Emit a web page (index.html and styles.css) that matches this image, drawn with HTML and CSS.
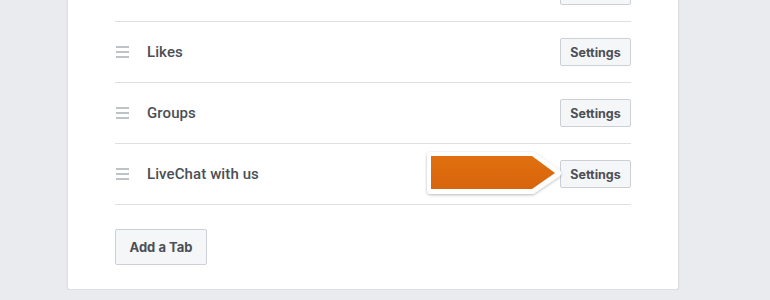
FILE: index.html
```html
<!DOCTYPE html>
<html>
<head>
<meta charset="utf-8">
<link rel="stylesheet" href="styles.css">
</head>
<body>
<div class="card">
  <ul class="tabs">
    <li class="tab">
      <span class="handle"><i></i><i></i><i></i></span>
      <span class="label"></span>
      <button class="btn" aria-label="Settings"></button>
    </li>
    <li class="tab">
      <span class="handle"><i></i><i></i><i></i></span>
      <span class="label">Likes</span>
      <button class="btn">Settings</button>
    </li>
    <li class="tab">
      <span class="handle"><i></i><i></i><i></i></span>
      <span class="label">Groups</span>
      <button class="btn">Settings</button>
    </li>
    <li class="tab">
      <span class="handle"><i></i><i></i><i></i></span>
      <span class="label">LiveChat with us</span>
      <svg class="pointer" width="140" height="48" viewBox="0 0 140 48">
        <defs>
          <filter id="sh" x="-10%" y="-30%" width="120%" height="160%">
            <feDropShadow dx="0" dy="1" stdDeviation="1.6" flood-color="#000" flood-opacity="0.28"/>
          </filter>
          <linearGradient id="og" x1="0" y1="0" x2="0" y2="1">
            <stop offset="0" stop-color="#e0700f"/>
            <stop offset="1" stop-color="#d8640c"/>
          </linearGradient>
        </defs>
        <path d="M6 5 H107 L132 22 L107 39 H6 Z" fill="#fff" stroke="#fff" stroke-width="8" stroke-linejoin="round" filter="url(#sh)"/>
        <path d="M6 5 H107 L130 22 L107 38 H6 Z" fill="url(#og)"/>
      </svg>
      <button class="btn">Settings</button>
    </li>
  </ul>
  <button class="btn btn-lg">Add a Tab</button>
</div>
</body>
</html>
```
FILE: styles.css
```css
html, body {
  margin: 0;
  padding: 0;
  background: #e9ebee;
  overflow: hidden;
}
body {
  font-family: Roboto, "Liberation Sans", Arial, sans-serif;
  color: #4b4f56;
}
.card {
  width: 612px;
  margin: -39px 0 0 67px;
  background: #fff;
  border: 1px solid #dddfe2;
  border-top: 0;
  border-radius: 0 0 3px 3px;
  box-shadow: 0 1px 2px rgba(0,0,0,0.06);
  padding: 0 47px 24px 47px;
  box-sizing: border-box;
}
.tabs {
  list-style: none;
  margin: 0 0 24px 0;
  padding: 0;
}
.tab {
  position: relative;
  display: flex;
  align-items: center;
  height: 60px;
  border-bottom: 1px solid #dddfe2;
}
.handle {
  display: flex;
  flex-direction: column;
  gap: 3px;
  width: 13px;
  margin-left: 1px;
  margin-right: 18px;
}
.handle i {
  display: block;
  height: 2px;
  background: #bec3c9;
}
.label {
  flex: 1;
  font-family: Roboto, "Liberation Sans", Arial, sans-serif;
  font-size: 15px;
  font-weight: 500;
  color: #4b4f56;
  letter-spacing: 0.1px;
}
.btn {
  font-family: Inter, "Liberation Sans", Arial, sans-serif;
  font-size: 12.5px;
  font-weight: 700;
  color: #4b4f56;
  background: #f5f6f7;
  border: 1px solid #ccd0d5;
  border-radius: 2px;
  height: 28px;
  width: 71px;
  padding: 0;
  cursor: pointer;
}
.btn-lg {
  display: block;
  height: 36px;
  width: 92px;
  font-size: 13px;
}
.pointer {
  position: absolute;
  left: 310px;
  top: 7px;
}
```
